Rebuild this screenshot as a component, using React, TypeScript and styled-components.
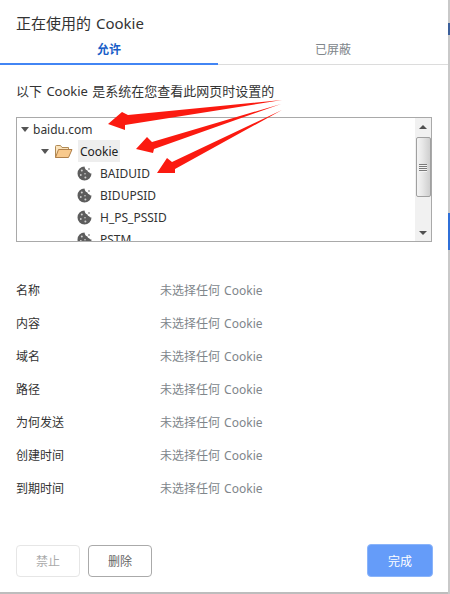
import React from "react";
import styled, { createGlobalStyle } from "styled-components";

const Global = createGlobalStyle`
  html, body { margin: 0; padding: 0; background: #fff; }
  body { font-family: "Noto Sans", "Noto Sans CJK SC", sans-serif; word-spacing: 1px; }
`;

const Page = styled.div`
  position: relative;
  display: flex;
  width: 450px;
  height: 594px;
  overflow: hidden;
  background: #fff;
`;

const Dialog = styled.div`
  display: flex;
  flex-direction: column;
  width: 448px;
  height: 592px;
  background: #fff;
  border-bottom-right-radius: 3px;
`;

const Rail = styled.div`
  display: flex;
  flex-direction: column;
  width: 2px;
  height: 594px;
  background: #c9c9c9;
`;

const RailMark = styled.div<{ $top: number; $height: number; $color: string }>`
  width: 2px;
  height: ${(p) => p.$height}px;
  margin-top: ${(p) => p.$top}px;
  background: ${(p) => p.$color};
`;

const BottomEdge = styled.div`
  position: absolute;
  left: 0;
  bottom: 0;
  width: 448px;
  height: 2px;
  background: #bdbdbd;
`;

const Title = styled.h1`
  margin: 0;
  height: 40px;
  padding: 11px 16px 0;
  box-sizing: border-box;
  font-size: 15px;
  font-weight: 400;
  line-height: 24px;
  color: #333;
`;

const Tabs = styled.div`
  display: flex;
  height: 25px;
  border-bottom: 1px solid #dcdcdc;
  box-sizing: border-box;
`;

const Tab = styled.div<{ $active?: boolean }>`
  flex: 0 0 ${(p) => (p.$active ? 218 : 230)}px;
  height: ${(p) => (p.$active ? 25 : 24)}px;
  box-sizing: border-box;
  text-align: center;
  font-size: 12px;
  line-height: 20px;
  font-weight: ${(p) => (p.$active ? 700 : 400)};
  color: ${(p) => (p.$active ? "#1a5fc8" : "#80868b")};
  border-bottom: ${(p) => (p.$active ? "2px solid #4285f4" : "none")};
`;

const Description = styled.p`
  margin: 0;
  padding: 16px 16px 0;
  height: 52px;
  box-sizing: border-box;
  font-size: 13px;
  line-height: 20px;
  color: #333;
`;

const TreeBox = styled.div`
  display: flex;
  margin: 0 16px;
  width: 416px;
  height: 125px;
  box-sizing: border-box;
  border: 1px solid #a9a9a9;
  overflow: hidden;
`;

const TreeList = styled.div`
  flex: 1;
  overflow: hidden;
`;

const TreeRow = styled.div<{ $indent: number }>`
  display: flex;
  align-items: center;
  height: 22px;
  padding-left: ${(p) => p.$indent}px;
  font-size: 12px;
  color: #333;
`;

const Caret = styled.span`
  width: 0;
  height: 0;
  margin-right: 4px;
  border-left: 4px solid transparent;
  border-right: 4px solid transparent;
  border-top: 5px solid #555;
`;

const Selected = styled.span`
  display: flex;
  align-items: center;
  height: 22px;
  padding: 0 2px;
  margin-left: 5px;
  background: #eee;
  color: #222;
`;

const NodeLabel = styled.span`
  margin-left: 8px;
  color: #333;
`;

const Scrollbar = styled.div`
  display: flex;
  flex-direction: column;
  align-items: center;
  width: 16px;
  background: #f1f1f1;
`;

const ScrollArrow = styled.span<{ $down?: boolean }>`
  width: 0;
  height: 0;
  margin-top: ${(p) => (p.$down ? 34 : 7)}px;
  border-left: 4px solid transparent;
  border-right: 4px solid transparent;
  ${(p) =>
    p.$down
      ? "border-top: 4px solid #505050;"
      : "border-bottom: 4px solid #505050;"}
`;

const Thumb = styled.div`
  display: flex;
  flex-direction: column;
  align-items: center;
  justify-content: center;
  gap: 1px;
  width: 15px;
  height: 60px;
  margin-top: 8px;
  box-sizing: border-box;
  border: 1px solid #a0a0a0;
  border-radius: 2px;
  background: linear-gradient(90deg, #f4f4f4 0%, #e8e8e8 40%, #cfcfcf 100%);
`;

const Grip = styled.span`
  width: 8px;
  height: 1px;
  background: #7a7a7a;
  box-shadow: 0 1px 0 #f4f4f4;
`;

const Details = styled.div`
  display: flex;
  flex-direction: column;
  padding: 31px 16px 0;
`;

const DetailRow = styled.div`
  display: flex;
  align-items: center;
  height: 33px;
  font-size: 12px;
`;

const DetailLabel = styled.span`
  width: 144px;
  color: #333;
`;

const DetailValue = styled.span`
  color: #80868b;
`;

const Footer = styled.div`
  display: flex;
  align-items: center;
  gap: 8px;
  margin-top: auto;
  padding: 0 15px 15px 16px;
`;

const Button = styled.button<{ $variant: "disabled" | "normal" | "primary" }>`
  width: ${(p) => (p.$variant === "primary" ? 66 : 64)}px;
  height: ${(p) => (p.$variant === "primary" ? 33 : 32)}px;
  padding: 0;
  font: inherit;
  font-size: 12px;
  border-radius: 4px;
  ${(p) =>
    p.$variant === "primary" &&
    "margin-left: auto; background: #659cf9; border: 1px solid #8ab4fa; color: #fff;"}
  ${(p) =>
    p.$variant === "normal" &&
    "background: #fff; border: 1px solid #aaa; color: #666;"}
  ${(p) =>
    p.$variant === "disabled" &&
    "background: #fff; border: 1px solid #e6e6e6; color: #aaa;"}
`;

const ArrowLayer = styled.svg`
  position: absolute;
  left: 0;
  top: 0;
  pointer-events: none;
`;

const FolderSvg = styled.svg`
  margin-left: 1px;
`;

const FolderIcon = () => (
  <FolderSvg width="19" height="15" viewBox="0 0 19 15">
    <path
      d="M1.5 13.5V2.5Q1.5 1.5 2.5 1.5H6.5L8 3.5H14.5V5.5"
      fill="#fbe3bb"
      stroke="#b08a55"
    />
    <path
      d="M1.5 13.5L4.5 5.5H18L14.5 13.5Z"
      fill="#f8c98c"
      stroke="#b0804a"
      strokeLinejoin="round"
    />
  </FolderSvg>
);

const CookieIcon = () => (
  <svg width="15" height="15" viewBox="0 0 15 15">
    <path
      d="M7.5 .5A7 7 0 1 0 14.5 7.5Q13 7.8 12.4 6.4Q10.6 6.4 10.4 4.6Q8 4 7.5 .5Z"
      fill="#5d5d5d"
    />
    <circle cx="4.8" cy="4.6" r="1" fill="#d0d0d0" />
    <circle cx="3.8" cy="9" r=".9" fill="#d0d0d0" />
    <circle cx="8" cy="7.8" r=".8" fill="#d0d0d0" />
    <circle cx="8.4" cy="11.4" r="1" fill="#d0d0d0" />
    <circle cx="12" cy="3" r=".8" fill="#5d5d5d" />
  </svg>
);

const Arrows = () => (
  <ArrowLayer width="450" height="594" viewBox="0 0 450 594">
    <polygon
      points="282,100 128,115 122,112 108,124 125,130 125,125"
      fill="#fb1a10"
    />
    <polygon
      points="281,104 152,142 147,137 136,149 153,153 154,149"
      fill="#fb1a10"
    />
    <polygon
      points="282,110 172,162 167,158 157,173 175,173 175,169"
      fill="#fb1a10"
    />
  </ArrowLayer>
);

const cookies = ["BAIDUID", "BIDUPSID", "H_PS_PSSID", "PSTM"];
const fields = ["名称", "内容", "域名", "路径", "为何发送", "创建时间", "到期时间"];

export default function App() {
  return (
    <Page>
      <Global />
      <Dialog>
        <Title>正在使用的 Cookie</Title>
        <Tabs>
          <Tab $active>允许</Tab>
          <Tab>已屏蔽</Tab>
        </Tabs>
        <Description>以下 Cookie 是系统在您查看此网页时设置的</Description>
        <TreeBox>
          <TreeList>
            <TreeRow $indent={4}>
              <Caret />
              baidu.com
            </TreeRow>
            <TreeRow $indent={24}>
              <Caret />
              <FolderIcon />
              <Selected>Cookie</Selected>
            </TreeRow>
            {cookies.map((name) => (
              <TreeRow $indent={60} key={name}>
                <CookieIcon />
                <NodeLabel>{name}</NodeLabel>
              </TreeRow>
            ))}
          </TreeList>
          <Scrollbar>
            <ScrollArrow />
            <Thumb>
              <Grip />
              <Grip />
              <Grip />
              <Grip />
            </Thumb>
            <ScrollArrow $down />
          </Scrollbar>
        </TreeBox>
        <Details>
          {fields.map((field) => (
            <DetailRow key={field}>
              <DetailLabel>{field}</DetailLabel>
              <DetailValue>未选择任何 Cookie</DetailValue>
            </DetailRow>
          ))}
        </Details>
        <Footer>
          <Button $variant="disabled">禁止</Button>
          <Button $variant="normal">删除</Button>
          <Button $variant="primary">完成</Button>
        </Footer>
      </Dialog>
      <Rail>
        <RailMark $top={23} $height={12} $color="#3b5f9a" />
        <RailMark $top={178} $height={37} $color="#2f6fd8" />
      </Rail>
      <BottomEdge />
      <Arrows />
    </Page>
  );
}
